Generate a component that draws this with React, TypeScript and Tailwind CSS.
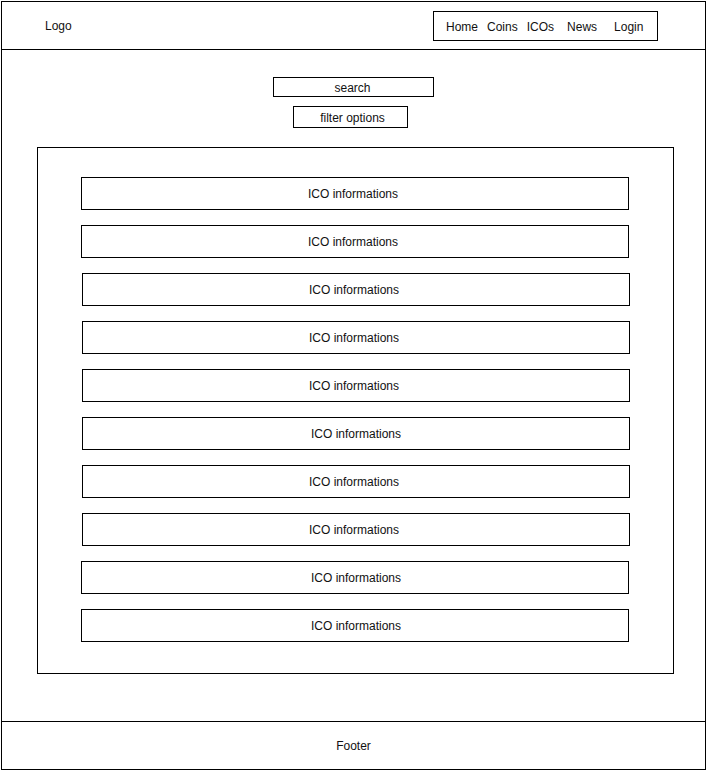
import React from "react";

const rows = [
  { dx: 0, tx: 0 },
  { dx: 0, tx: 0 },
  { dx: 1, tx: 0 },
  { dx: 1, tx: -1 },
  { dx: 1, tx: -1 },
  { dx: 1, tx: 2 },
  { dx: 1, tx: 0 },
  { dx: 1, tx: 0 },
  { dx: 0, tx: 3 },
  { dx: 0, tx: 3 },
];

export default function App() {
  return (
    <div className="ml-[1px] mt-[1px] w-[705px] h-[769px] border border-black flex flex-col bg-white text-[12px] leading-[14px] text-[#111] font-['Liberation_Sans',Arial,sans-serif]">
      <header className="h-[48px] shrink-0 border-b border-black flex items-start">
        <div className="pl-[43px] mt-[17px]">Logo</div>
        <nav className="ml-auto mr-[47px] mt-[9px] w-[225px] h-[30px] border border-black flex items-center pl-[12px] pt-[2px]">
          <span>Home</span>
          <span className="ml-[9px]">Coins</span>
          <span className="ml-[9px]">ICOs</span>
          <span className="ml-[13px]">News</span>
          <span className="ml-[17px]">Login</span>
        </nav>
      </header>
      <main className="flex-1 flex flex-col">
        <div className="mt-[27px] ml-[271px] w-[161px] h-[20px] border border-black flex items-center justify-center pt-[2px] pr-[2px]">
          search
        </div>
        <div className="mt-[9px] ml-[291px] w-[115px] h-[22px] border border-black flex items-center justify-center pl-[4px] pt-[2px]">
          filter options
        </div>
        <div className="mt-[19px] ml-[35px] w-[637px] h-[527px] border border-black flex flex-col gap-[15px] pt-[29px] pl-[43px]">
          {rows.map((r, i) => (
            <div
              key={i}
              className="w-[548px] h-[33px] border border-black flex items-center justify-center"
              style={{ marginLeft: r.dx, paddingLeft: r.tx * 2, paddingRight: 4 }}
            >
              ICO informations
            </div>
          ))}
        </div>
      </main>
      <footer className="h-[48px] shrink-0 border-t border-black flex items-center justify-center">
        Footer
      </footer>
    </div>
  );
}
